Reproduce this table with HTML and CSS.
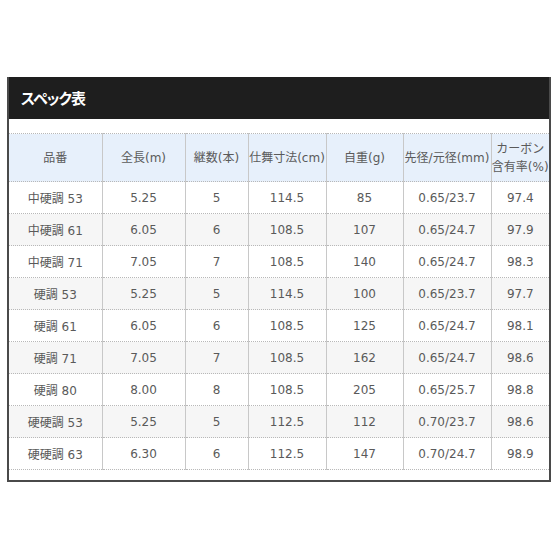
FILE: index.html
```html
<!DOCTYPE html>
<html lang="ja">
<head>
<meta charset="utf-8">
<link rel="stylesheet" href="styles.css">
</head>
<body>
<div class="spec">
  <div class="spec-title">スペック表</div>
  <div class="spec-body">
    <table class="spec-table">
      <colgroup>
        <col class="c1"><col class="c2"><col class="c3"><col class="c4"><col class="c5"><col class="c6"><col class="c7">
      </colgroup>
      <thead>
        <tr><th>品番</th><th>全長(m)</th><th>継数(本)</th><th>仕舞寸法(cm)</th><th>自重(g)</th><th>先径/元径(mm)</th><th>カーボン<br>含有率(%)</th></tr>
      </thead>
      <tbody>
        <tr><td>中硬調 53</td><td>5.25</td><td>5</td><td>114.5</td><td>85</td><td>0.65/23.7</td><td>97.4</td></tr>
        <tr><td>中硬調 61</td><td>6.05</td><td>6</td><td>108.5</td><td>107</td><td>0.65/24.7</td><td>97.9</td></tr>
        <tr><td>中硬調 71</td><td>7.05</td><td>7</td><td>108.5</td><td>140</td><td>0.65/24.7</td><td>98.3</td></tr>
        <tr><td>硬調 53</td><td>5.25</td><td>5</td><td>114.5</td><td>100</td><td>0.65/23.7</td><td>97.7</td></tr>
        <tr><td>硬調 61</td><td>6.05</td><td>6</td><td>108.5</td><td>125</td><td>0.65/24.7</td><td>98.1</td></tr>
        <tr><td>硬調 71</td><td>7.05</td><td>7</td><td>108.5</td><td>162</td><td>0.65/24.7</td><td>98.6</td></tr>
        <tr><td>硬調 80</td><td>8.00</td><td>8</td><td>108.5</td><td>205</td><td>0.65/25.7</td><td>98.8</td></tr>
        <tr><td>硬硬調 53</td><td>5.25</td><td>5</td><td>112.5</td><td>112</td><td>0.70/23.7</td><td>98.6</td></tr>
        <tr><td>硬硬調 63</td><td>6.30</td><td>6</td><td>112.5</td><td>147</td><td>0.70/24.7</td><td>98.9</td></tr>
      </tbody>
    </table>
  </div>
</div>
</body>
</html>
```
FILE: styles.css
```css
html, body {
  margin: 0;
  padding: 0;
  background: #ffffff;
}
body {
  font-family: "DejaVu Sans", "Noto Sans CJK JP", sans-serif;
}
.spec {
  margin: 77px 0 0 7px;
  width: 544px;
  box-sizing: border-box;
  border: 2px solid #4a4a4a;
  border-top: 0;
}
.spec-title {
  height: 42px;
  background: #1e1e1e;
  color: #ffffff;
  font-family: "Noto Sans CJK JP", sans-serif;
  font-weight: bold;
  font-size: 15px;
  font-feature-settings: "palt";
  letter-spacing: -1px;
  line-height: 42px;
  padding-left: 12px;
}
.spec-body {
  padding: 14px 0 10px 0;
}
.spec-table {
  width: 540px;
  table-layout: fixed;
  border-collapse: collapse;
  font-size: 12px;
  color: #5a5a5a;
}
.c1 { width: 93px; }
.c2 { width: 83px; }
.c3 { width: 63px; }
.c4 { width: 78px; }
.c5 { width: 77px; }
.c6 { width: 88px; }
.c7 { width: 58px; }
.spec-table th,
.spec-table td {
  text-align: center;
  padding: 0;
  border-left: 1px solid #c8c8c8;
  border-top: 1px dotted #b8b8b8;
  border-bottom: 1px dotted #b8b8b8;
  white-space: nowrap;
}
.spec-table th:first-child,
.spec-table td:first-child {
  border-left: 0;
}
.spec-table th {
  height: 47px;
  background: #e7f0fb;
  font-weight: normal;
  line-height: 18px;
}
.spec-table td {
  height: 31px;
}
.spec-table tbody tr:nth-child(even) td {
  background: #f6f6f6;
}
```
